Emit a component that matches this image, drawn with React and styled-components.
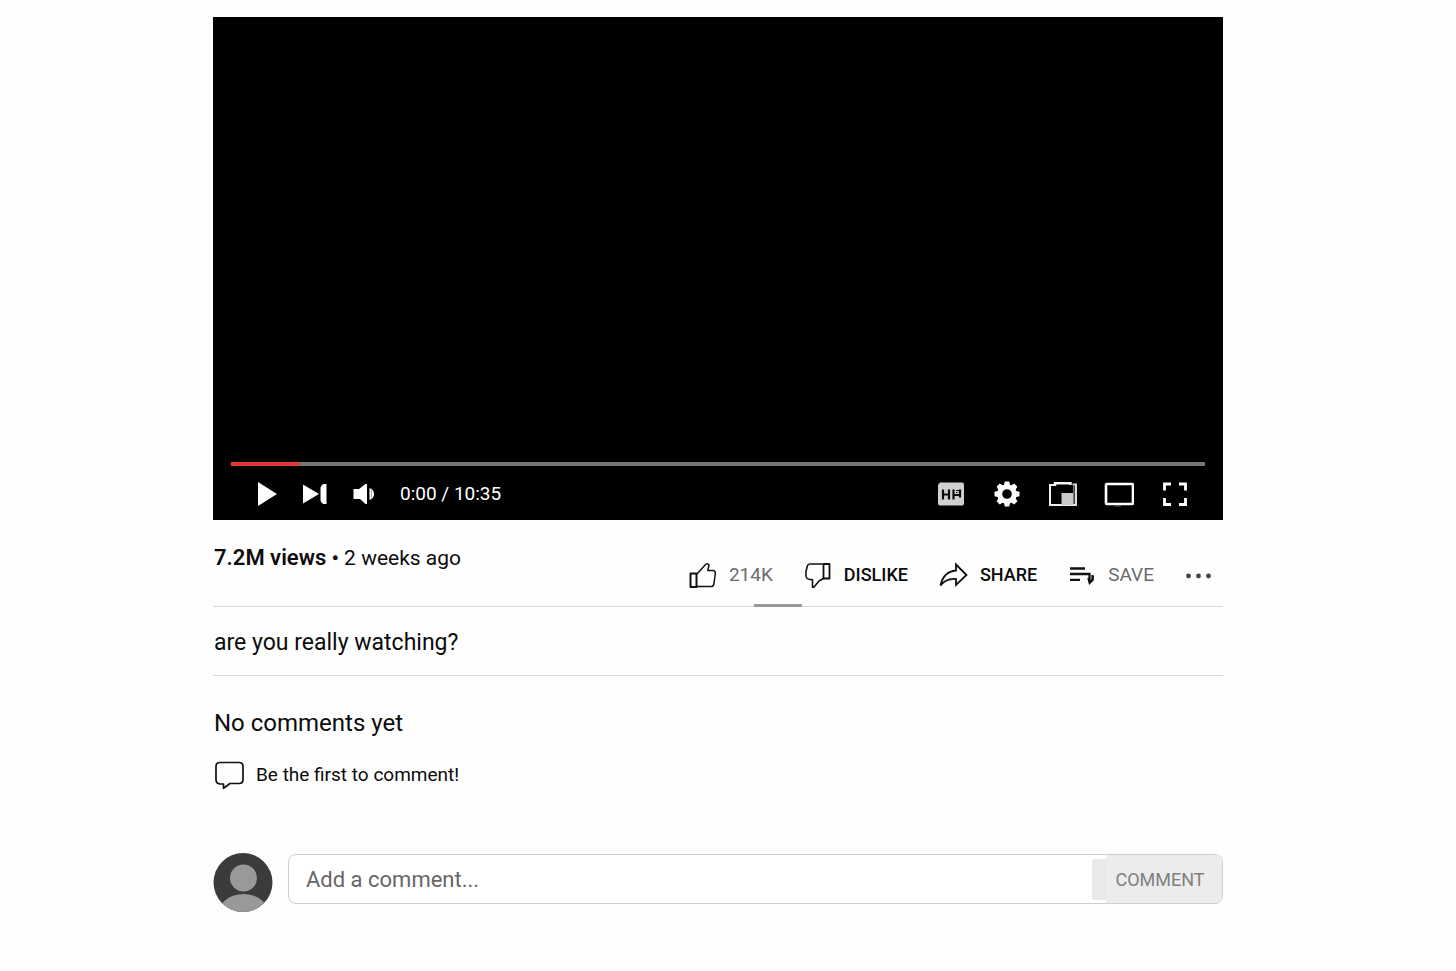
import React from "react";
import styled, { createGlobalStyle } from "styled-components";

const GlobalStyle = createGlobalStyle`
  *, *::before, *::after { box-sizing: border-box; }
  body {
    margin: 0;
    background: #fefefe;
    color: #0c0c0c;
    font-family: Roboto, "Liberation Sans", sans-serif;
  }
  h1, h2, p { margin: 0; font-weight: 400; }
  button, input { font: inherit; color: inherit; }
`;

const Page = styled.div`
  padding: 17px 20px 48px 0;
`;

const Column = styled.main`
  width: calc(100% - 48px);
  max-width: 1010px;
  margin: 0 auto;
`;

const Player = styled.section`
  display: flex;
  flex-direction: column;
  justify-content: flex-end;
  aspect-ratio: 1010 / 503;
  padding: 0 18px;
  background: #000;
  color: #fff;
`;

const Track = styled.div`
  height: 4px;
  background: #757575;
`;

const Played = styled.div`
  width: 7%;
  height: 100%;
  background: #e53935;
`;

const Controls = styled.div`
  display: flex;
  align-items: center;
  justify-content: space-between;
  height: 54px;
  padding: 2px 12px 0 22px;
`;

const ControlGroup = styled.div`
  display: flex;
  align-items: center;
  gap: 20px;
`;

const IconButton = styled.button`
  display: flex;
  align-items: center;
  justify-content: center;
  width: ${(p) => (p.$wide ? 36 : 28)}px;
  height: 36px;
  padding: 0;
  border: 0;
  background: none;
  cursor: pointer;
`;

const Time = styled.span`
  padding-left: 3px;
  font-size: 19px;
  line-height: 24px;
`;

const InfoBar = styled.section`
  position: relative;
  display: flex;
  align-items: flex-start;
  justify-content: space-between;
  height: 87px;
  padding: 24px 10px 0 1px;
  border-bottom: 1px solid #d9d9d9;
`;

const Marker = styled.span`
  position: absolute;
  right: 421px;
  bottom: -1px;
  width: 48px;
  height: 3px;
  background: #9a9a9a;
`;

const Stats = styled.p`
  font-size: 21px;
  line-height: 28px;
`;

const Views = styled.strong`
  font-size: 22px;
  font-weight: 600;
`;

const Dot = styled.span`
  font-weight: 600;
`;

const Actions = styled.div`
  display: flex;
  align-items: center;
  gap: 31px;
  padding-top: 11px;
`;

const Action = styled.button`
  display: flex;
  align-items: center;
  gap: 12px;
  height: 40px;
  padding: 0;
  border: 0;
  background: none;
  font-size: ${(p) => (p.$muted ? 19 : 18)}px;
  line-height: 24px;
  font-weight: ${(p) => (p.$muted ? 400 : 500)};
  color: ${(p) => (p.$muted ? "#6b6b6b" : "#0c0c0c")};
  cursor: pointer;

  svg { color: #111; }
`;

const Description = styled.h1`
  height: 69px;
  padding: 20px 0 0 1px;
  border-bottom: 1px solid #d9d9d9;
  font-size: 23px;
  line-height: 32px;
`;

const Comments = styled.section`
  padding-top: 31px;
`;

const CommentsTitle = styled.h2`
  padding-left: 1px;
  font-size: 24px;
  line-height: 32px;
`;

const Prompt = styled.p`
  display: flex;
  align-items: center;
  gap: 12px;
  padding: 21px 0 0 1px;
  font-size: 19px;
  line-height: 30px;
`;

const Composer = styled.form`
  display: flex;
  align-items: flex-start;
  gap: 15px;
  padding-top: 63px;
`;

const Field = styled.div`
  display: flex;
  align-items: center;
  flex: 1;
  height: 50px;
  margin-top: 1px;
  border: 1px solid #cfcfcf;
  border-radius: 8px;
  background: #fff;
  overflow: hidden;
`;

const CommentInput = styled.input`
  flex: 1;
  min-width: 0;
  height: 100%;
  padding: 0 17px;
  border: 0;
  outline: 0;
  background: none;
  font-size: 22px;
  color: #222;

  &::placeholder { color: #666; opacity: 1; }
`;

const Tab = styled.span`
  width: 14px;
  height: 41px;
  border-radius: 3px 0 0 3px;
  background: #e9e9e9;
`;

const Submit = styled.button`
  width: 116px;
  height: 100%;
  padding: 0 8px 0 0;
  border: 0;
  background: #ececec;
  font-size: 18px;
  color: #808080;
  text-align: center;
`;

const Svg = ({ w, h, children, ...rest }) => (
  <svg width={w} height={h} viewBox={`0 0 ${w} ${h}`} fill="none" aria-hidden="true" {...rest}>
    {children}
  </svg>
);

const PlayIcon = () => (
  <Svg w={20} h={24}><path d="M1 0L20 12L1 24Z" fill="#fff" /></Svg>
);

const NextIcon = () => (
  <Svg w={24} h={20}>
    <path d="M0 0.500L16 10L0 19.500Z" fill="#fff" />
    <path d="M23.500 0V20H20.500Q17.500 18.500 17.500 15.500V4.500Q17.500 1.500 20.500 0Z" fill="#fff" />
  </Svg>
);

const VolumeIcon = () => (
  <Svg w={22} h={22}>
    <path d="M1.500 6.500Q1.500 6 2 6H7L13.500 1H15V21H13.500L8 16H2Q1.500 16 1.500 15.500Z" fill="#fff" />
    <path d="M17.500 5Q22 6.500 22 11Q22 15.500 17.500 17Z" fill="#fff" />
    <path d="M19.500 6.500V15.500" stroke="#999" strokeWidth="0.800" />
  </Svg>
);

const CaptionsIcon = () => (
  <Svg w={28} h={24}>
    <path d="M3 0.500H25Q27 .5 27 2.500V21.500Q27 23.500 25 23.500H3Q1 23.500 1 21.500V3Z" fill="#d0d0d0" />
    <path d="M6 7.500V17.500M12 7.500V17.500M6 12.500H12M16.500 7.500V17.500M16.500 13H23M23 7.500V15.500" stroke="#0a0a0a" strokeWidth="2.200" />
    <path d="M19 8.500H23M19 10.500H20.500" stroke="#0a0a0a" strokeWidth="1" />
  </Svg>
);

const GearIcon = () => (
  <Svg w={26} h={26}>
    <circle cx="13" cy="13" r="7.300" stroke="#fff" strokeWidth="5" />
    {[0, 45, 90, 135, 180, 225, 270, 315].map((angle) => (
      <path key={angle} d="M9.800 4.500L10.800 .5H15.200L16.200 4.500Z" fill="#fff" transform={`rotate(${angle} 13 13)`} />
    ))}
  </Svg>
);

const MiniPlayerIcon = () => (
  <Svg w={30} h={26}>
    <path d="M7 4H2V24H28" stroke="#eee" strokeWidth="2" />
    <path d="M7 5V2.200H22.500V4" stroke="#f4f4f4" strokeWidth="2.500" />
    <path d="M24.500 3.500H28V25" stroke="#ddd" strokeWidth="2" />
    <path d="M13.500 12H25.500V24H13.500Z" fill="#c9c9c9" />
    <path d="M25.800 5V23" stroke="#777" strokeWidth="1.500" />
  </Svg>
);

const TheaterIcon = () => (
  <Svg w={30} h={26}>
    <rect x="2" y="3" width="27" height="20" rx="1" stroke="#fff" strokeWidth="2.600" />
    <path d="M11 25H17" stroke="#666" strokeWidth="1" />
  </Svg>
);

const FullscreenIcon = () => (
  <Svg w={26} h={24}>
    <path d="M2.500 8.500V2H9M17 2H23.500V8.500M23.500 16V22.500H17M9 22.500H2.500V16" stroke="#fff" strokeWidth="2.800" />
  </Svg>
);

const LikeIcon = () => (
  <Svg w={28} h={28} stroke="currentColor" strokeWidth="1.500" strokeLinejoin="round">
    <path d="M1.500 12.500H7.500V26H1.500Z" strokeWidth="2" />
    <path d="M8 13L17 3Q18.500 2 20 4L18.800 9.500H24.500Q26.500 9.800 26.300 12.500L25 22.500Q24.500 25.200 22.500 25.500H8" />
  </Svg>
);

const DislikeIcon = () => (
  <Svg w={28} h={28} stroke="currentColor" strokeWidth="1.600" strokeLinejoin="round">
    <path d="M19.500 3H25.500V17.500H19.500Z" strokeWidth="1.800" />
    <path d="M19.500 3H6Q4 3 3.300 5L2 10.500Q1.200 18 5 18.300L8.500 18.800V26.200H9.800L15 20L19.500 17.500" />
  </Svg>
);

const ShareIcon = () => (
  <Svg w={29} h={28} stroke="currentColor" strokeWidth="1.800" strokeLinejoin="miter">
    <path d="M17 3.500L27.500 14L17 24V18Q7.500 17 1.500 24.500Q4.500 10.500 17 9.500Z" />
  </Svg>
);

const SaveIcon = () => (
  <Svg w={28} h={28} stroke="currentColor" strokeWidth="2.300">
    <path d="M2 7.500H17M2 13H21.500V21M2 18.800H12M21.500 21.500L24.500 18.500V14" />
    <path d="M20 17L21.500 22.500L25 19V15" strokeWidth="1.500" />
  </Svg>
);

const MoreIcon = () => (
  <Svg w={28} h={28} fill="#444">
    <circle cx="3.500" cy="15" r="2.400" />
    <circle cx="13.500" cy="15" r="2.400" />
    <circle cx="23.500" cy="15" r="2.400" />
  </Svg>
);

const BubbleIcon = () => (
  <Svg w={30} h={30} stroke="#111" strokeWidth="1.700" strokeLinejoin="round">
    <path d="M6 2.500H25Q29 2.500 29 6.500V19.500Q29 23.500 25 23.500H16L9.500 28.300V24H6Q2 23.500 2 19.500V6.500Q2 2.500 6 2.500Z" />
  </Svg>
);

const AvatarIcon = () => (
  <Svg w={60} h={60}>
    <clipPath id="avatar-clip"><circle cx="30" cy="29.500" r="29.500" /></clipPath>
    <g clipPath="url(#avatar-clip)">
      <rect width="60" height="60" fill="#3b3b3b" />
      <circle cx="30.500" cy="25" r="13.500" fill="#999" />
      <ellipse cx="30.500" cy="61" rx="25" ry="20" fill="#999" />
    </g>
  </Svg>
);

export default function App() {
  return (
    <>
      <GlobalStyle />
      <Page>
        <Column>
          <Player aria-label="Video player">
            <Track><Played /></Track>
            <Controls>
              <ControlGroup>
                <IconButton aria-label="Play"><PlayIcon /></IconButton>
                <IconButton aria-label="Next"><NextIcon /></IconButton>
                <IconButton aria-label="Volume"><VolumeIcon /></IconButton>
                <Time>0:00 / 10:35</Time>
              </ControlGroup>
              <ControlGroup>
                <IconButton $wide aria-label="Captions"><CaptionsIcon /></IconButton>
                <IconButton $wide aria-label="Settings"><GearIcon /></IconButton>
                <IconButton $wide aria-label="Mini player"><MiniPlayerIcon /></IconButton>
                <IconButton $wide aria-label="Theater mode"><TheaterIcon /></IconButton>
                <IconButton $wide aria-label="Full screen"><FullscreenIcon /></IconButton>
              </ControlGroup>
            </Controls>
          </Player>

          <InfoBar>
            <Stats><Views>7.2M views</Views> <Dot>•</Dot> 2 weeks ago</Stats>
            <Actions>
              <Action $muted><LikeIcon />214K</Action>
              <Action><DislikeIcon />DISLIKE</Action>
              <Action><ShareIcon />SHARE</Action>
              <Action $muted><SaveIcon />SAVE</Action>
              <Action aria-label="More actions"><MoreIcon /></Action>
            </Actions>
            <Marker />
          </InfoBar>

          <Description>are you really watching?</Description>

          <Comments>
            <CommentsTitle>No comments yet</CommentsTitle>
            <Prompt><BubbleIcon />Be the first to comment!</Prompt>
            <Composer onSubmit={(e) => e.preventDefault()}>
              <AvatarIcon />
              <Field>
                <CommentInput aria-label="Add a comment" placeholder="Add a comment..." />
                <Tab />
                <Submit type="submit">COMMENT</Submit>
              </Field>
            </Composer>
          </Comments>
        </Column>
      </Page>
    </>
  );
}
